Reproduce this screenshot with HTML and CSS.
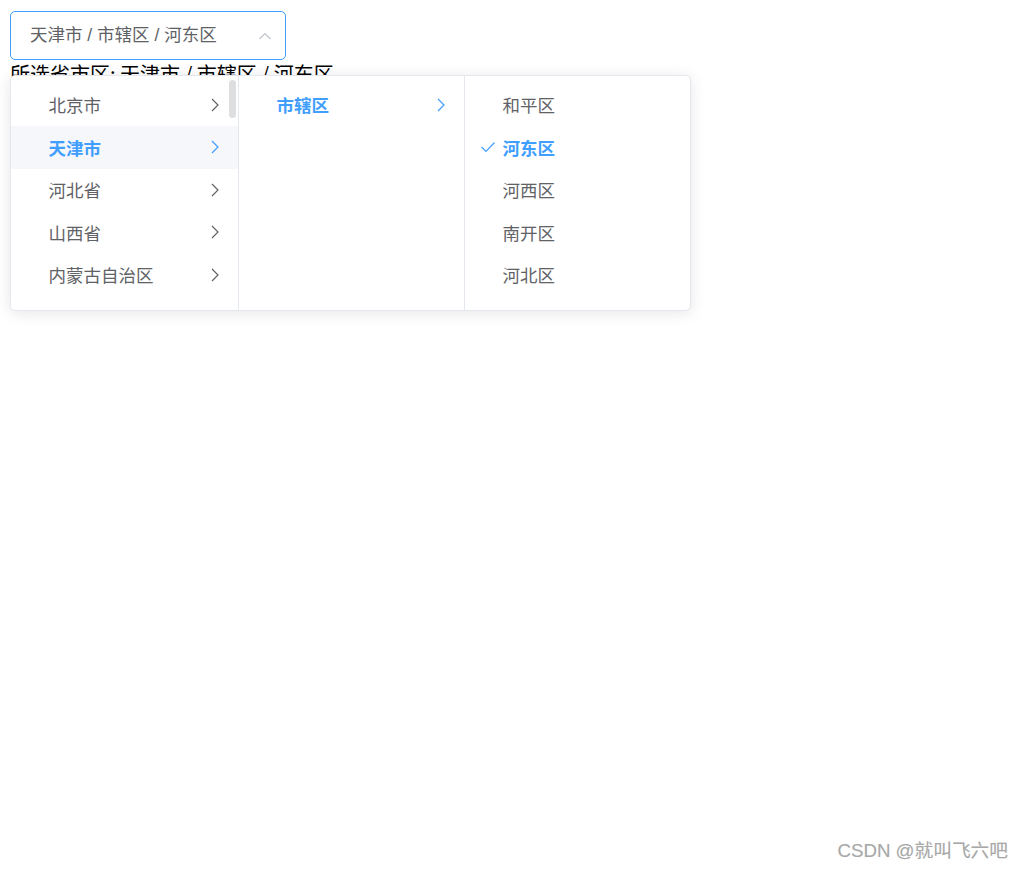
FILE: index.html
```html
<!DOCTYPE html>
<html lang="zh-CN">
<head>
<meta charset="utf-8">
<link rel="stylesheet" href="styles.css">
</head>
<body>
<div class="app">
  <div class="cascader">
    <div class="input">
      <span class="input-text">天津市 / 市辖区 / 河东区</span>
      <svg class="input-arrow" width="14" height="10" viewBox="0 0 14 10"><polyline points="1.5,8 7,2.5 12.5,8" fill="none" stroke="#C0C4CC" stroke-width="1.2"/></svg>
    </div>
  </div>
  <div class="result">所选省市区: 天津市 / 市辖区 / 河东区</div>

  <div class="dropdown">
    <div class="menu menu-first">
      <ul class="list">
        <li class="node"><span class="label">北京市</span><svg class="arrow" width="8" height="14" viewBox="0 0 8 14"><polyline points="1,1 7,7 1,13" fill="none" stroke="currentColor" stroke-width="1.2"/></svg></li>
        <li class="node active hover"><span class="label">天津市</span><svg class="arrow" width="8" height="14" viewBox="0 0 8 14"><polyline points="1,1 7,7 1,13" fill="none" stroke="currentColor" stroke-width="1.2"/></svg></li>
        <li class="node"><span class="label">河北省</span><svg class="arrow" width="8" height="14" viewBox="0 0 8 14"><polyline points="1,1 7,7 1,13" fill="none" stroke="currentColor" stroke-width="1.2"/></svg></li>
        <li class="node"><span class="label">山西省</span><svg class="arrow" width="8" height="14" viewBox="0 0 8 14"><polyline points="1,1 7,7 1,13" fill="none" stroke="currentColor" stroke-width="1.2"/></svg></li>
        <li class="node"><span class="label">内蒙古自治区</span><svg class="arrow" width="8" height="14" viewBox="0 0 8 14"><polyline points="1,1 7,7 1,13" fill="none" stroke="currentColor" stroke-width="1.2"/></svg></li>
        <li class="node"><span class="label">辽宁省</span><svg class="arrow" width="8" height="14" viewBox="0 0 8 14"><polyline points="1,1 7,7 1,13" fill="none" stroke="currentColor" stroke-width="1.2"/></svg></li>
      </ul>
      <div class="scrollbar"></div>
    </div>
    <div class="menu">
      <ul class="list">
        <li class="node active"><span class="label">市辖区</span><svg class="arrow" width="8" height="14" viewBox="0 0 8 14"><polyline points="1,1 7,7 1,13" fill="none" stroke="currentColor" stroke-width="1.2"/></svg></li>
      </ul>
    </div>
    <div class="menu">
      <ul class="list">
        <li class="node"><span class="label">和平区</span></li>
        <li class="node active"><svg class="check" width="16" height="12" viewBox="0 0 16 12"><polyline points="1.5,6 6,10.5 14.5,1.5" fill="none" stroke="currentColor" stroke-width="1.2"/></svg><span class="label">河东区</span></li>
        <li class="node"><span class="label">河西区</span></li>
        <li class="node"><span class="label">南开区</span></li>
        <li class="node"><span class="label">河北区</span></li>
        <li class="node"><span class="label">红桥区</span></li>
      </ul>
    </div>
  </div>
</div>
<div class="watermark">CSDN @就叫飞六吧</div>
</body>
</html>
```

FILE: styles.css
```css
html, body {
  margin: 0;
  padding: 0;
  background: #fff;
}
html {
  height: 100%;
}
body {
  box-sizing: border-box;
  min-height: 100%;
  padding: 11px 10px 10px;
  position: relative;
  font-family: "Liberation Sans", "Noto Sans CJK SC", sans-serif;
}
.app {
  position: relative;
}
.cascader {
  display: inline-block;
  width: 276px;
  height: 49px;
  vertical-align: top;
}
.input {
  box-sizing: border-box;
  width: 100%;
  height: 49px;
  border: 1px solid #409EFF;
  border-radius: 5px;
  padding: 0 13px 0 19px;
  display: flex;
  align-items: center;
  justify-content: space-between;
  font-size: 17.5px;
  color: #606266;
}
.input-text {
  line-height: 1;
}
.input-arrow {
  display: block;
  margin-top: 1px;
}
.result {
  font-family: "Noto Sans CJK SC", sans-serif;
  font-size: 20px;
  line-height: 25px;
  color: #000;
  margin-top: 1px;
}
.dropdown {
  position: absolute;
  top: 64px;
  left: 0;
  display: flex;
  background: #fff;
  border: 1px solid #E4E7ED;
  border-radius: 5px;
  box-shadow: 0 2px 15px 0 rgba(0,0,0,0.1);
  overflow: hidden;
}
.menu {
  position: relative;
  width: 225px;
  height: 234px;
  border-right: 1px solid #E4E7ED;
  overflow: hidden;
}
.menu-first {
  width: 227px;
}
.menu:last-child {
  border-right: none;
}
.list {
  list-style: none;
  margin: 0;
  padding: 7.5px 0;
}
.node {
  position: relative;
  display: flex;
  align-items: center;
  height: 42.5px;
  padding: 0 18.75px 0 25px;
  font-size: 17.5px;
  color: #606266;
}
.node.hover {
  background: #F5F7FA;
}
.node.active {
  color: #409EFF;
  font-weight: bold;
}
.label {
  flex: 1;
  padding: 0 12.5px;
  white-space: nowrap;
}
.arrow {
  display: block;
  color: #606266;
}
.node.active .arrow {
  color: #409EFF;
}
.check {
  position: absolute;
  left: 15px;
  top: 15px;
  color: #409EFF;
}
.scrollbar {
  position: absolute;
  top: 4px;
  right: 2px;
  width: 7px;
  height: 38px;
  border-radius: 4px;
  background: #dddee0;
}
.watermark {
  position: absolute;
  right: 16px;
  bottom: 7px;
  font-family: "Liberation Sans", "Noto Sans CJK SC", sans-serif;
  font-size: 18.7px;
  color: #a8a8a8;
  text-shadow: 0 0 1px rgba(0,0,0,0.1);
}
```
